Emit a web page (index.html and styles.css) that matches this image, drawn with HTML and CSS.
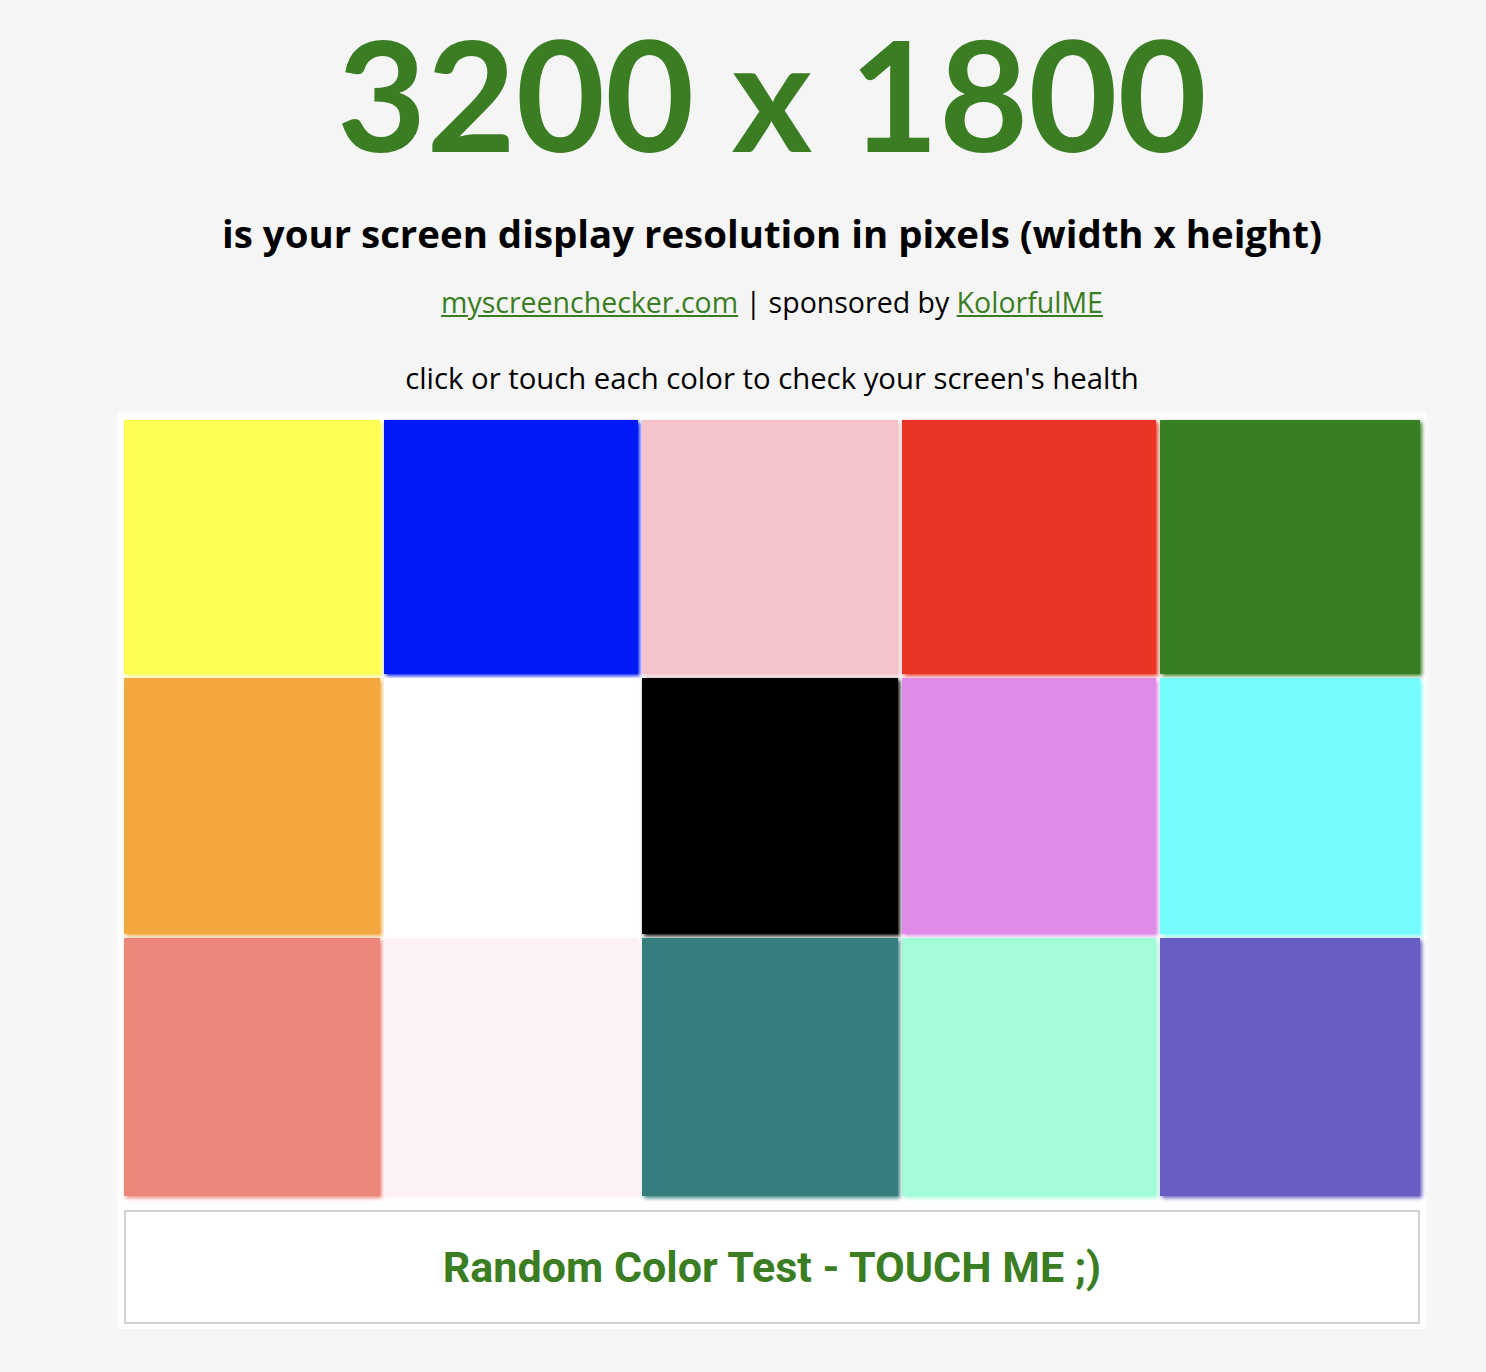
FILE: index.html
```html
<!DOCTYPE html>
<html lang="en">
<head>
<meta charset="utf-8">
<title>My Screen Resolution</title>
<link rel="stylesheet" href="styles.css">
</head>
<body>
<div class="page">
  <h1 class="resolution">3200 x 1800</h1>
  <h2 class="subtitle">is your screen display resolution in pixels (width x height)</h2>
  <p class="links"><a href="#">myscreenchecker.com</a> | sponsored by <a href="#">KolorfulME</a></p>
  <p class="hint">click or touch each color to check your screen's health</p>
  <div class="panel">
    <div class="swatches">
      <div class="sw c-yellow"></div>
      <div class="sw c-blue"></div>
      <div class="sw c-pink"></div>
      <div class="sw c-red"></div>
      <div class="sw c-green"></div>
      <div class="sw c-orange"></div>
      <div class="sw c-white"></div>
      <div class="sw c-black"></div>
      <div class="sw c-violet"></div>
      <div class="sw c-cyan"></div>
      <div class="sw c-salmon"></div>
      <div class="sw c-blush"></div>
      <div class="sw c-teal"></div>
      <div class="sw c-mint"></div>
      <div class="sw c-slate"></div>
    </div>
    <div class="random-btn">Random Color Test - TOUCH ME ;)</div>
  </div>
</div>
</body>
</html>
```

FILE: styles.css
```css
html, body {
  margin: 0;
  padding: 0;
  background: #f5f5f5;
}
body {
  font-family: "Open Sans", Lato, sans-serif;
  color: #000;
  font-variant-ligatures: none;
}
.page {
  width: 1308px;
  margin-left: 118px;
  text-align: center;
}
.resolution {
  margin: 16px 0 0;
  font-family: Lato, "Open Sans", sans-serif;
  font-size: 154px;
  line-height: 154px;
  font-weight: 700;
  color: #3a7d23;
}
.subtitle {
  margin: 44px 0 0;
  font-size: 38.4px;
  line-height: 38px;
  font-weight: 700;
}
.links {
  margin: 37px 0 0;
  font-size: 28.5px;
  line-height: 27px;
}
.links a {
  color: #3a7d23;
  text-decoration: underline;
}
.hint {
  margin: 49px 0 0;
  font-size: 29.3px;
  line-height: 27px;
}
.panel {
  margin-top: 21px;
  background: #fff;
  padding: 7px 6px 5px;
  box-shadow: 0 0 8px #fff;
}
.swatches {
  display: grid;
  grid-template-columns: 256px 254px 256px 254px 260px;
  grid-template-rows: 254px 256px 258px;
  gap: 4px;
}
.sw {
  background: currentColor;
  box-shadow: 2px 2px 4px currentColor;
}
.c-yellow { color: #feff54; }
.c-blue { color: #0019f5; }
.c-pink { color: #f5c3cb; }
.c-red { color: #ea3526; }
.c-green { color: #387e22; }
.c-orange { color: #f2a73f; }
.c-white { color: #ffffff; }
.c-black { color: #000000; }
.c-violet { color: #e08be8; }
.c-cyan { color: #75fbfd; }
.c-salmon { color: #ec8679; }
.c-blush { color: #fcf1f4; }
.c-teal { color: #377e7f; }
.c-mint { color: #a3fcd7; }
.c-slate { color: #685dc2; }
.random-btn {
  margin-top: 14px;
  height: 110px;
  border: 2px solid #d3d3d3;
  background: #fff;
  display: flex;
  align-items: center;
  justify-content: center;
  font-family: Roboto, "Liberation Sans", sans-serif;
  font-weight: 700;
  font-size: 43px;
  letter-spacing: 0;
  color: #3a7d23;
}
```
